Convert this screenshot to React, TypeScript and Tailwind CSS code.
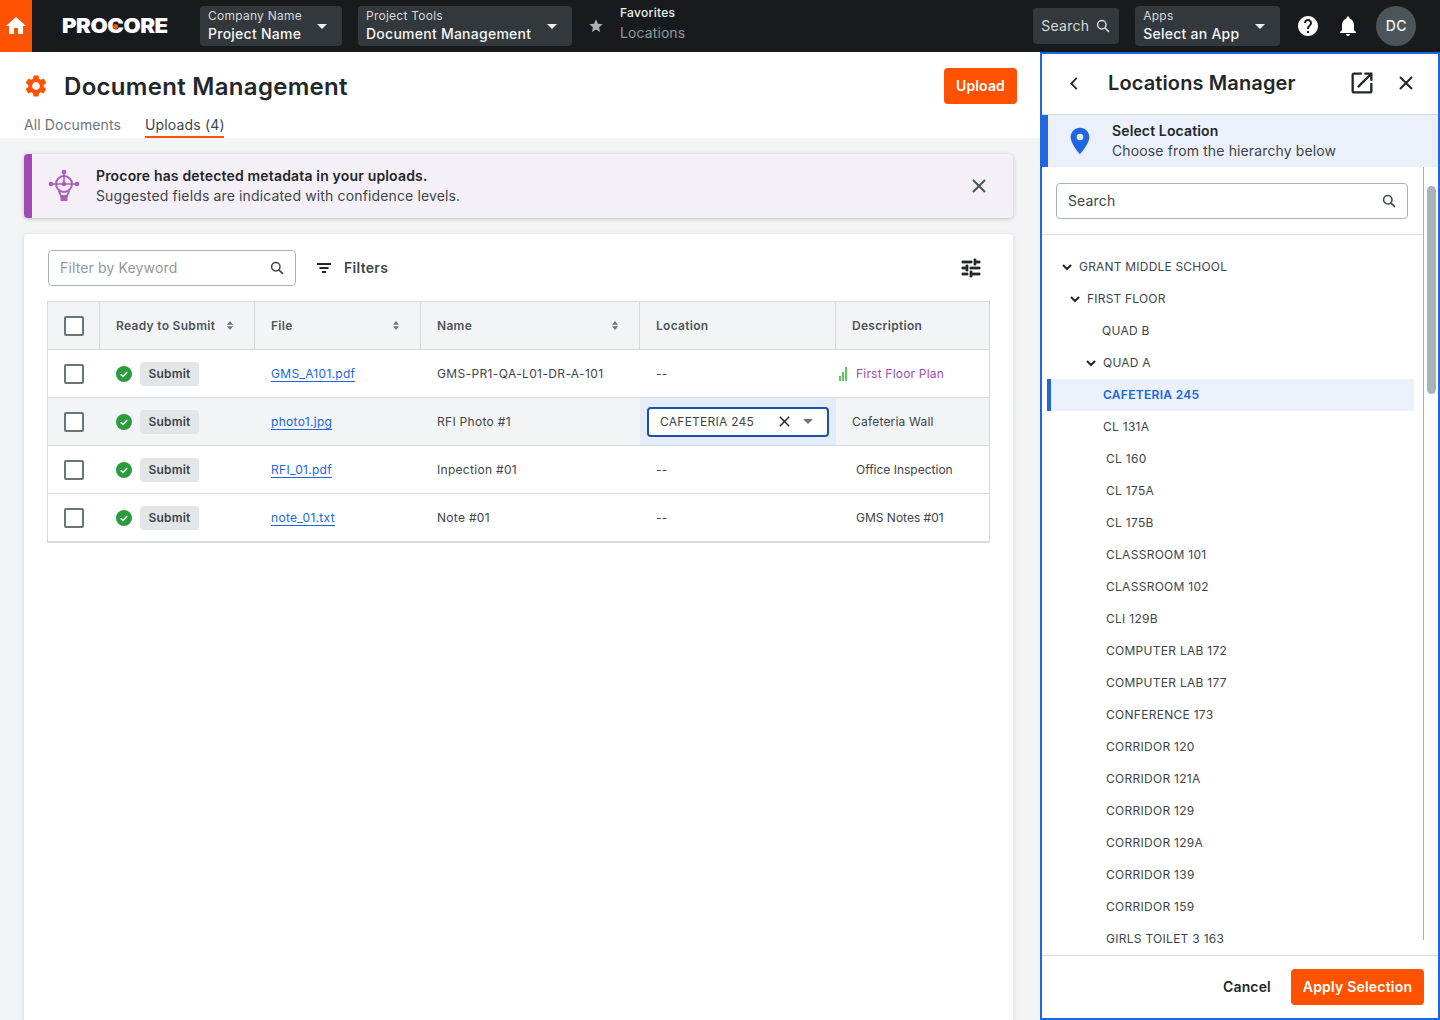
import React from "react";

const P: Record<string, string> = {
  home: "M10 20v-6h4v6h5v-8h3L12 3 2 12h3v8z",
  gear: "M19.14 12.94c.04-.3.06-.61.06-.94 0-.32-.02-.64-.07-.94l2.03-1.58c.18-.14.23-.41.12-.61l-1.92-3.32c-.12-.22-.37-.29-.59-.22l-2.39.96c-.5-.38-1.03-.7-1.62-.94l-.36-2.54c-.04-.24-.24-.41-.48-.41h-3.84c-.24 0-.43.17-.47.41l-.36 2.54c-.59.24-1.13.57-1.62.94l-2.39-.96c-.22-.08-.47 0-.59.22L2.74 8.87c-.12.21-.08.47.12.61l2.03 1.58c-.05.3-.09.63-.09.94s.02.64.07.94l-2.03 1.58c-.18.14-.23.41-.12.61l1.92 3.32c.12.22.37.29.59.22l2.39-.96c.5.38 1.03.7 1.62.94l.36 2.54c.05.24.24.41.48.41h3.84c.24 0 .44-.17.47-.41l.36-2.54c.59-.24 1.13-.56 1.62-.94l2.39.96c.22.08.47 0 .59-.22l1.92-3.32c.12-.22.07-.47-.12-.61l-2.01-1.58zM12 15.6c-1.98 0-3.6-1.62-3.6-3.6s1.62-3.6 3.6-3.6 3.6 1.62 3.6 3.6-1.62 3.6-3.6 3.6z",
  tune: "M3 17v2h6v-2H3zM3 5v2h10V5H3zm10 16v-2h8v-2h-8v-2h-2v6h2zM7 9v2H3v2h4v2h2V9H7zm14 4v-2H11v2h10zm-6-4h2V7h4V5h-4V3h-2v6z",
  open: "M19 19H5V5h7V3H5c-1.11 0-2 .9-2 2v14c0 1.1.89 2 2 2h14c1.1 0 2-.9 2-2v-7h-2v7zM14 3v2h3.59l-9.83 9.83 1.41 1.41L19 6.41V10h2V3h-7z",
  help: "M12 2C6.48 2 2 6.48 2 12s4.48 10 10 10 10-4.48 10-10S17.52 2 12 2zm1 17h-2v-2h2v2zm2.07-7.75l-.9.92C13.45 12.9 13 13.5 13 15h-2v-.5c0-1.1.45-2.1 1.17-2.83l1.24-1.26c.37-.36.59-.86.59-1.41 0-1.1-.9-2-2-2s-2 .9-2 2H8c0-2.21 1.79-4 4-4s4 1.79 4 4c0 .88-.36 1.68-.93 2.25z",
  bell: "M12 22c1.1 0 2-.9 2-2h-4c0 1.1.89 2 2 2zm6-6v-5c0-3.07-1.64-5.64-4.5-6.32V4c0-.83-.67-1.5-1.5-1.5s-1.5.67-1.5 1.5v.68C7.63 5.36 6 7.92 6 11v5l-2 2v1h16v-1l-2-2z",
  star: "M12 17.27L18.18 21l-1.64-7.03L22 9.24l-7.19-.61L12 2 9.19 8.63 2 9.24l5.46 4.73L5.82 21z",
  place: "M12 2C8.13 2 5 5.13 5 9c0 5.25 7 13 7 13s7-7.75 7-13c0-3.87-3.13-7-7-7zm0 9.5a2.5 2.5 0 010-5 2.5 2.5 0 010 5z",
};

function Ic({ n, s, c }: { n: string; s: string; c?: string }) {
  return (
    <svg viewBox="0 0 24 24" className={`${s} ${c ?? ""} shrink-0`} fill="currentColor">
      <path d={P[n]} />
    </svg>
  );
}

function Mag({ c }: { c: string }) {
  return (
    <svg viewBox="0 0 14 14" className={`h-[14px] w-[14px] shrink-0 ${c}`} fill="none" stroke="currentColor" strokeWidth="1.5">
      <circle cx="5.8" cy="5.8" r="4.2" />
      <path d="M8.9 8.9l4 4" />
    </svg>
  );
}

function Cross({ c, w = 2 }: { c: string; w?: number }) {
  return (
    <svg viewBox="0 0 14 14" className={`shrink-0 ${c}`} fill="none" stroke="currentColor" strokeWidth={w}>
      <path d="M1 1l12 12M13 1L1 13" />
    </svg>
  );
}

function Caret({ c }: { c: string }) {
  return (
    <svg viewBox="0 0 10 5" className={`h-[5px] w-[10px] shrink-0 ${c}`} fill="currentColor">
      <path d="M0 0h10L5 5z" />
    </svg>
  );
}

function Sort() {
  return (
    <svg viewBox="0 0 6 9" className="h-[9px] w-[6px] shrink-0 text-[#6a767c]" fill="currentColor">
      <path d="M3 0l3 3.7H0zM3 9L0 5.300h6z" />
    </svg>
  );
}

function Chev() {
  return (
    <svg viewBox="0 0 10 7" className="h-[7px] w-[10px] shrink-0 text-[#232729]" fill="none" stroke="currentColor" strokeWidth="2">
      <path d="M1 1l4 4 4-4" />
    </svg>
  );
}

function Drop({ w, label, value }: { w: string; label: string; value: string }) {
  return (
    <div className={`${w} flex h-10 items-center justify-between rounded bg-[#32383b] pl-2 pr-[15px]`}>
      <div className="pb-[1px]">
        <div className="text-xs leading-[16px] tracking-[0.25px] text-[#d6dadc]">{label}</div>
        <div className="mt-[1px] text-sm font-medium leading-[18px] tracking-[0.25px] text-[#f4f5f6]">{value}</div>
      </div>
      <Caret c="text-[#eef0f1]" />
    </div>
  );
}

function Box() {
  return <div className="h-5 w-5 rounded-[2px] border-2 border-[#6a767c] bg-white" />;
}

const cols = "grid grid-cols-[52px_155px_166px_219px_196px_1fr]";

function HeadCell({ t, sort, b = true }: { t: string; sort?: boolean; b?: boolean }) {
  return (
    <div className={`flex items-center justify-between pl-4 pr-[21px] ${b ? "border-r border-[#d6dadc]" : ""}`}>
      <span className="text-xs font-semibold tracking-[0.3px] text-[#4b5559]">{t}</span>
      {sort && <Sort />}
    </div>
  );
}

function Row({ file, name, hover, loc, desc, last }: { file: string; name: React.ReactNode; hover?: boolean; loc: React.ReactNode; desc: React.ReactNode; last?: boolean }) {
  return (
    <div className={`${cols} ${last ? "h-[49px] border-b-2" : "h-12 border-b"} border-[#d6dadc] ${hover ? "bg-[#f3f4f6]" : "bg-white"} text-xs tracking-[0.2px] text-[#3d4548]`}>
      <div className="flex items-center justify-center"><Box /></div>
      <div className="flex items-center pl-4">
        <svg viewBox="0 0 16 16" className="mr-2 h-4 w-4 shrink-0">
          <circle cx="8" cy="8" r="8" fill="#2e9a3f" />
          <path d="M4.7 8.2l2.3 2.2 4.2-4.4" fill="none" stroke="#fff" strokeWidth="1.4" />
        </svg>
        <span className="flex h-6 w-[59px] items-center justify-center rounded bg-[#e3e6e8] font-semibold text-[#3d4548]">Submit</span>
      </div>
      <div className="flex items-center pl-4">
        <span className="mt-[2px] border-b border-[#2066df] leading-[14px] tracking-[0.3px] text-[#2066df]">{file}</span>
      </div>
      <div className="flex items-center pl-4 tracking-[0.3px]">{name}</div>
      {loc}
      {desc}
    </div>
  );
}

const Dash = <div className="flex items-center pl-4">--</div>;

const rest = ["CL 160", "CL 175A", "CL 175B", "CLASSROOM 101", "CLASSROOM 102", "CLI 129B", "COMPUTER LAB 172", "COMPUTER LAB 177", "CONFERENCE 173", "CORRIDOR 120", "CORRIDOR 121A", "CORRIDOR 129", "CORRIDOR 129A", "CORRIDOR 139", "CORRIDOR 159", "GIRLS TOILET 3 163"];

function TreeRow({ t, pl, chev }: { t: string; pl: string; chev?: boolean }) {
  return (
    <div className={`flex h-8 items-center ${pl} text-xs ${chev ? "tracking-[0.2px]" : "tracking-[0.28px]"} text-[#3d4548]`}>
      {chev && <span className="mr-[7px]"><Chev /></span>}
      {t}
    </div>
  );
}

export default function App() {
  return (
    <div className="relative h-[1020px] w-[1440px] overflow-hidden bg-[#f3f4f6] [font-family:Inter,sans-serif]">
      <header className="flex h-[52px] items-center bg-[#171b1e]">
        <div className="flex h-[52px] w-8 items-center justify-center bg-[#ff5200] text-white">
          <Ic n="home" s="h-6 w-6" />
        </div>
        <div className="relative ml-[30px] w-[138px] text-[20px] font-black leading-none text-white">
          <span className="block origin-left scale-x-[1.11] tracking-[-0.4px]">PROCORE</span>
          <span className="absolute left-[51px] top-[8px] h-[5px] w-[5px] rounded-full bg-[#ff5200]" />
        </div>
        <Drop w="w-[142px]" label="Company Name" value="Project Name" />
        <div className="w-4" />
        <Drop w="w-[214px]" label="Project Tools" value="Document Management" />
        <Ic n="star" s="ml-4 h-4 w-4" c="text-[#a9b2b6]" />
        <div className="-mt-[6px] ml-[16px]">
          <div className="text-xs font-medium leading-[16px] tracking-[0.3px] text-[#eef0f1]">Favorites</div>
          <div className="mt-[3px] text-sm leading-[18px] tracking-[0.1px] text-[#8f999e]">Locations</div>
        </div>
        <div className="ml-[348px] flex h-9 w-[86px] items-center justify-between rounded bg-[#32383b] pl-2 pr-[9px] text-sm tracking-[0.25px] text-[#d6dadc]">
          Search <Mag c="text-[#d6dadc]" />
        </div>
        <div className="w-4" />
        <Drop w="w-[145px]" label="Apps" value="Select an App" />
        <Ic n="help" s="ml-[16px] h-6 w-6" c="text-white" />
        <Ic n="bell" s="ml-[16px] h-6 w-6" c="text-white" />
        <div className="ml-4 flex h-10 w-10 items-center justify-center rounded-full bg-[#4b5559] text-sm font-medium tracking-[0.3px] text-[#f4f5f6]">DC</div>
      </header>

      <div className="relative h-[86px] w-[1040px] bg-white">
        <Ic n="gear" s="absolute left-[23px] top-[21px] h-[26px] w-[26px]" c="text-[#ff5200]" />
        <h1 className="absolute left-[64px] top-[19px] text-2xl font-semibold leading-[32px] tracking-[0.3px] text-[#232729]">Document Management</h1>
        <button className="absolute left-[944px] top-4 h-9 w-[73px] rounded bg-[#ff5200] text-sm font-semibold tracking-[0.15px] text-white">Upload</button>
        <div className="absolute left-6 top-[65px] text-sm leading-[16px] tracking-[0.1px] text-[#6a767c]">All Documents</div>
        <div className="absolute left-[145px] top-[65px] h-[21px] w-[79px] whitespace-nowrap border-b-2 border-[#ff5200] text-sm leading-[16px] tracking-[0.16px] text-[#3d4548]">Uploads (4)</div>
      </div>

      <div className="absolute left-6 top-[154px] flex h-16 w-[989px] items-center rounded border-l-[8px] border-[#a04bb5] bg-[#f5eff7] shadow-[0_1px_4px_rgba(0,0,0,0.22)]">
        <svg viewBox="0 0 32 34" className="ml-4 h-[34px] w-8 shrink-0 text-[#a95cc0]" fill="none" stroke="currentColor" strokeWidth="2">
          <circle cx="16" cy="15" r="8" />
          <path d="M16 3v12M5 15h22" strokeWidth="1.600" />
          <path d="M11 22l2 5h6l2-5" />
          <rect x="12.500" y="27" width="7" height="5" fill="currentColor" stroke="none" />
          <circle cx="16" cy="3" r="2.300" fill="currentColor" stroke="none" />
          <circle cx="3" cy="15" r="2.300" fill="currentColor" stroke="none" />
          <circle cx="29" cy="15" r="2.300" fill="currentColor" stroke="none" />
          <circle cx="16" cy="15" r="2.300" fill="currentColor" stroke="none" />
        </svg>
        <div className="ml-4 text-sm leading-[20px] tracking-[0.14px] text-[#3d4548]">
          <div className="font-semibold tracking-[0.17px] text-[#232729]">Procore has detected metadata in your uploads.</div>
          <div>Suggested fields are indicated with confidence levels.</div>
        </div>
        <Cross c="absolute right-[27px] top-[25px] h-[14px] w-[14px] text-[#4b5559]" />
      </div>

      <div className="absolute left-6 top-[234px] h-[800px] w-[989px] rounded bg-white shadow-[0_1px_4px_rgba(0,0,0,0.15)]">
        <div className="absolute left-6 top-4 flex h-9 w-[248px] items-center justify-between rounded border border-[#a9b2b6] bg-white px-[11px] text-sm tracking-[0.14px] text-[#8f999e]">
          Filter by Keyword <Mag c="text-[#3d4548]" />
        </div>
        <svg viewBox="0 0 14 10" className="absolute left-[293px] top-[29px] h-[10px] w-[14px] text-[#232729]" fill="currentColor">
          <path d="M0 0h14v2H0zM2.500 4h9v2h-9zM5 8h4v2H5z" />
        </svg>
        <div className="absolute left-[320px] top-[25px] text-sm font-semibold leading-[18px] tracking-[0.3px] text-[#3d4548]">Filters</div>
        <Ic n="tune" s="absolute left-[935px] top-[22px] h-6 w-6" c="text-[#232729] [stroke:currentColor] [stroke-width:0.8]" />

        <div className="absolute left-[23px] top-[67px] w-[943px] border-l border-r border-t border-[#d6dadc]">
          <div className={`${cols} h-12 border-b border-[#d6dadc] bg-[#f3f4f6]`}>
            <div className="flex items-center justify-center border-r border-[#d6dadc]"><Box /></div>
            <HeadCell t="Ready to Submit" sort />
            <HeadCell t="File" sort />
            <HeadCell t="Name" sort />
            <HeadCell t="Location" />
            <HeadCell t="Description" b={false} />
          </div>
          <Row
            file="GMS_A101.pdf"
            name={<span className="tracking-[0.37px]">GMS-PR1-QA-L01-DR-A-101</span>}
            loc={Dash}
            desc={
              <div className="flex items-center pl-[3px]">
                <svg viewBox="0 0 8 14" className="mr-[9px] h-[14px] w-2 shrink-0" fill="#5bc866">
                  <rect x="0" y="9" width="2" height="5" />
                  <rect x="3" y="5" width="2" height="9" />
                  <rect x="6" y="0" width="2" height="14" />
                </svg>
                <span className="text-[#a04bb5]">First Floor Plan</span>
              </div>
            }
          />
          <Row
            file="photo1.jpg"
            name="RFI Photo #1"
            hover
            loc={
              <div className="flex items-center justify-center bg-[#e4ebf9]">
                <div className="flex h-[30px] w-[182px] items-center rounded border-2 border-[#1d4fa8] bg-white pl-[11px] pr-[14px]">
                  <span className="flex-1 tracking-[0.25px]">CAFETERIA 245</span>
                  <Cross c="mr-[13px] h-[11px] w-[11px] text-[#232729]" w={1.9} />
                  <Caret c="text-[#6a767c]" />
                </div>
              </div>
            }
            desc={<div className="flex items-center pl-4">Cafeteria Wall</div>}
          />
          <Row file="RFI_01.pdf" name="Inpection #01" loc={Dash} desc={<div className="flex items-center pl-5 tracking-normal">Office Inspection</div>} />
          <Row file="note_01.txt" name="Note #01" loc={Dash} desc={<div className="flex items-center pl-5 tracking-normal">GMS Notes #01</div>} last />
        </div>
      </div>

      <aside className="absolute left-[1040px] top-[52px] h-[968px] w-[400px] border-2 border-[#2066df] bg-white">
        <div className="relative h-[61px] border-b border-[#d6dadc]">
          <svg viewBox="0 0 8 14" className="absolute left-[28px] top-[23px] h-[13px] w-[8px] text-[#232729]" fill="none" stroke="currentColor" strokeWidth="2">
            <path d="M7 1L1 7l6 6" />
          </svg>
          <div className="absolute left-[66px] top-[15px] text-xl font-semibold leading-[28px] tracking-[0.12px] text-[#232729]">Locations Manager</div>
          <Ic n="open" s="absolute left-[306px] top-[15px] h-[28px] w-[28px]" c="text-[#232729]" />
          <Cross c="absolute left-[357px] top-[22px] h-[14px] w-[14px] text-[#232729]" />
        </div>

        <div className="relative h-[52px] border-l-[6px] border-[#2066df] bg-[#ebf0fb] pl-[64px] pt-[6px] text-sm leading-[20px] tracking-[0.13px] text-[#3d4548]">
          <Ic n="place" s="absolute left-[16px] top-[10px] h-8 w-8" c="text-[#2066df]" />
          <div className="font-semibold text-[#232729]">Select Location</div>
          <div>Choose from the hierarchy below</div>
        </div>

        <div className="relative h-[786px] w-[382px] overflow-hidden">
          <div className="absolute left-[14px] top-4 flex h-9 w-[352px] items-center justify-between rounded border border-[#a9b2b6] bg-white px-[11px] text-sm tracking-[0.14px] text-[#3d4548]">
            Search <Mag c="text-[#3d4548]" />
          </div>
          <div className="absolute left-0 top-[67px] w-full border-t border-[#d6dadc]" />
          <div className="absolute left-0 top-[84px] w-full">
            <TreeRow t="GRANT MIDDLE SCHOOL" pl="pl-[20px]" chev />
            <TreeRow t="FIRST FLOOR" pl="pl-[28px]" chev />
            <TreeRow t="QUAD B" pl="pl-[60px]" />
            <TreeRow t="QUAD A" pl="pl-[44px]" chev />
            <div className="ml-[5px] flex h-8 w-[367px] items-center border-l-4 border-[#2066df] bg-[#ebf0fb] pl-[52px] text-xs font-semibold tracking-[0.3px] text-[#2066df]">CAFETERIA 245</div>
            <TreeRow t="CL 131A" pl="pl-[61px]" />
            {rest.map((t) => (
              <TreeRow key={t} t={t} pl="pl-[64px]" />
            ))}
          </div>
        </div>
        <div className="absolute left-[381px] top-[113px] h-[773px] w-px bg-[#a9b2b6]" />

        <div className="absolute bottom-0 left-0 h-[63px] w-[396px] border-t border-[#d6dadc] bg-white">
          <div className="absolute left-[181px] top-[22px] text-sm font-semibold leading-[18px] tracking-[0.15px] text-[#232729]">Cancel</div>
          <button className="absolute left-[249px] top-[13px] h-9 w-[133px] rounded bg-[#ff5200] text-sm font-semibold tracking-[0.2px] text-white">Apply Selection</button>
        </div>

        <div className="absolute left-[385px] top-[132px] h-[208px] w-[9px] rounded-full bg-[#a9b2b6]" />
      </aside>
    </div>
  );
}
